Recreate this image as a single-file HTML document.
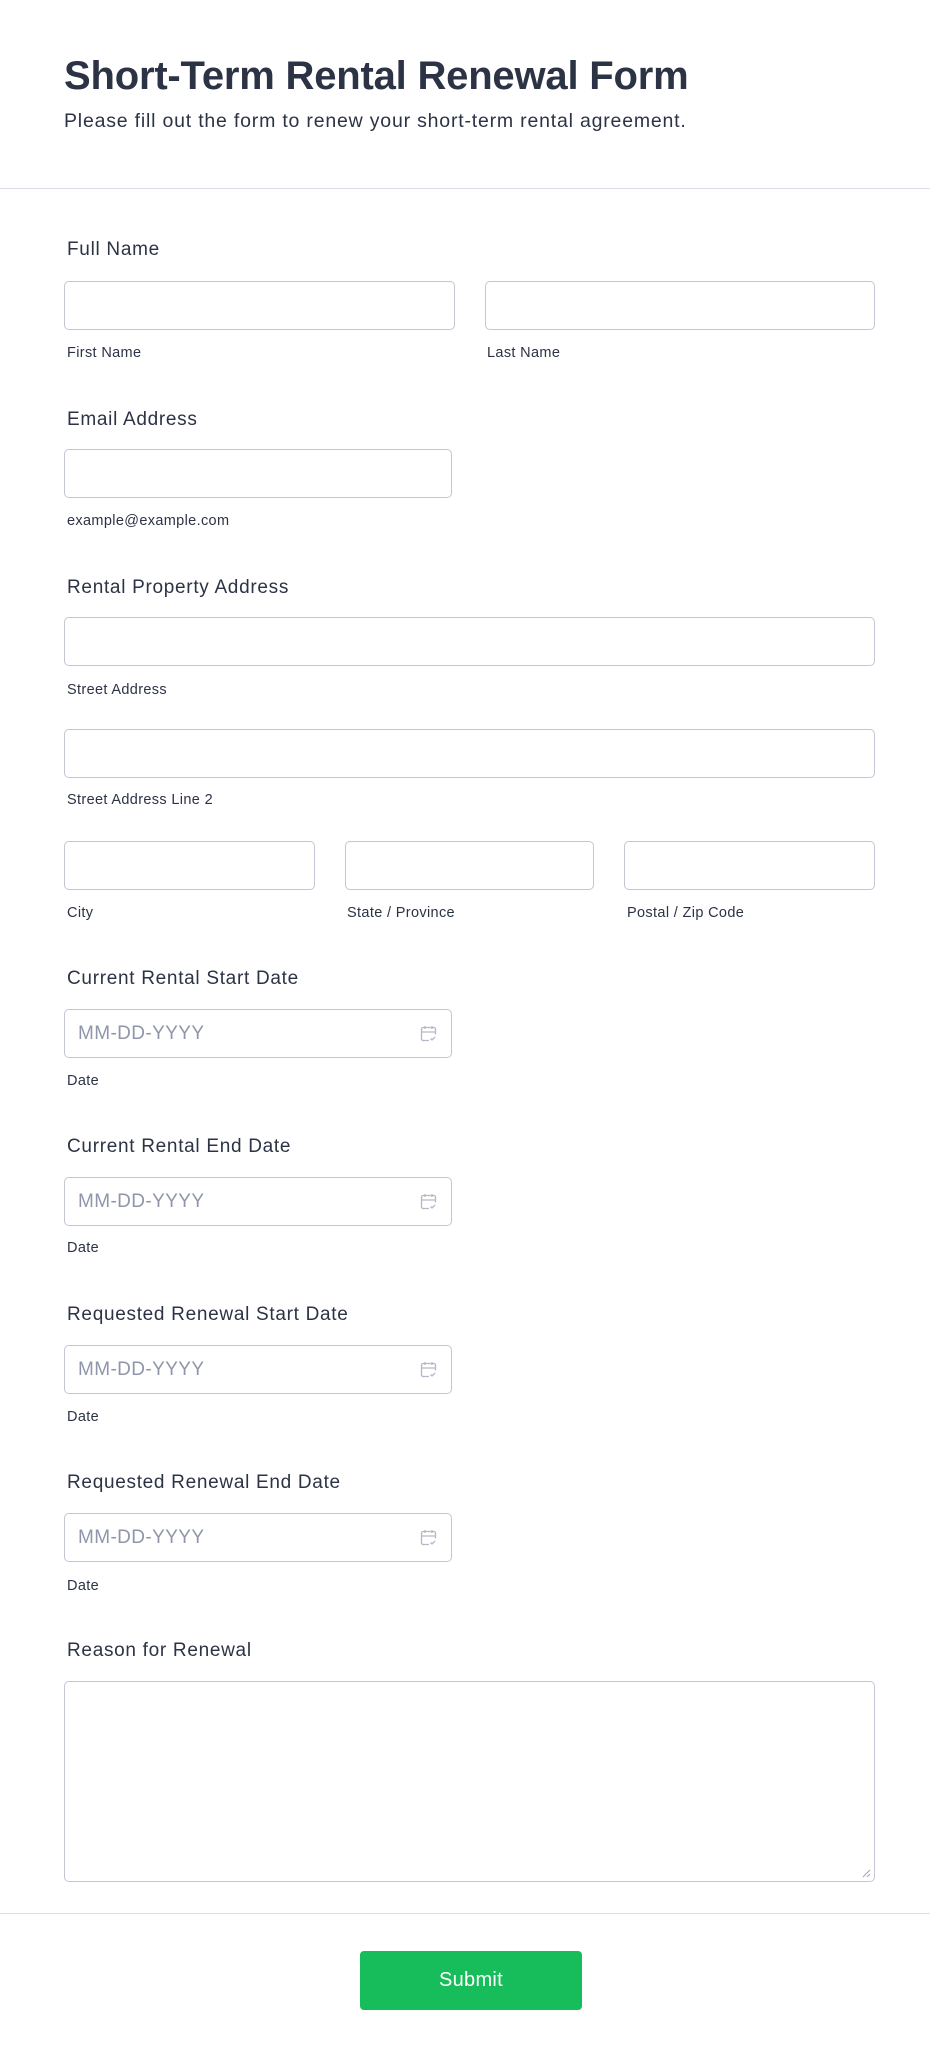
<!DOCTYPE html>
<html><head><meta charset="utf-8"><style>
*{box-sizing:border-box;margin:0;padding:0}
body{width:930px;height:2059px;background:#fff;font-family:"Liberation Sans",sans-serif;color:#2c3345;position:relative;overflow:hidden}
.a{position:absolute;white-space:nowrap}
h1{position:absolute;left:64px;top:54px;font-size:40px;font-weight:bold;letter-spacing:-0.2px}
.sub{left:64px;top:110px;font-size:19.5px;letter-spacing:0.8px}
.hr{position:absolute;left:0;width:930px;height:1px;background:#dcdde6}
.lb{font-size:19px;left:67px;transform:translateY(-50%);letter-spacing:0.7px}
.sl{font-size:14.5px;transform:translateY(-50%);letter-spacing:0.35px}
.in{position:absolute;border:1px solid #c3c6d4;border-radius:5px;background:#fff}
.ph{position:absolute;left:13px;top:50%;transform:translateY(-50%);font-size:19px;color:#8f96a8;letter-spacing:0.4px}
.cal{position:absolute;right:14px;top:50%;transform:translateY(-50%)}
.btn{position:absolute;left:360px;top:1951px;width:222px;height:59px;background:#18bd5b;border-radius:4px;color:#fff;font-size:20px;text-align:center;line-height:59px;letter-spacing:0.3px}
</style></head><body>
<h1>Short-Term Rental Renewal Form</h1>
<div class="a sub">Please fill out the form to renew your short-term rental agreement.</div>
<div class="hr" style="top:188px"></div>

<div class="a lb" style="top:250px">Full Name</div>
<div class="in" style="left:64px;top:281px;width:391px;height:49px"></div>
<div class="in" style="left:485px;top:281px;width:390px;height:49px"></div>
<div class="a sl" style="left:67px;top:353px">First Name</div>
<div class="a sl" style="left:487px;top:353px">Last Name</div>

<div class="a lb" style="top:420px">Email Address</div>
<div class="in" style="left:64px;top:449px;width:388px;height:49px"></div>
<div class="a sl" style="left:67px;top:521px">example@example.com</div>

<div class="a lb" style="top:588px">Rental Property Address</div>
<div class="in" style="left:64px;top:617px;width:811px;height:49px"></div>
<div class="a sl" style="left:67px;top:690px">Street Address</div>
<div class="in" style="left:64px;top:729px;width:811px;height:49px"></div>
<div class="a sl" style="left:67px;top:800px">Street Address Line 2</div>
<div class="in" style="left:64px;top:841px;width:251px;height:49px"></div>
<div class="in" style="left:345px;top:841px;width:249px;height:49px"></div>
<div class="in" style="left:624px;top:841px;width:251px;height:49px"></div>
<div class="a sl" style="left:67px;top:913px">City</div>
<div class="a sl" style="left:347px;top:913px">State / Province</div>
<div class="a sl" style="left:627px;top:913px">Postal / Zip Code</div>

<div class="a lb" style="top:979px">Current Rental Start Date</div>
<div class="in" style="left:64px;top:1009px;width:388px;height:49px"><span class="ph">MM-DD-YYYY</span><svg class="cal" width="17" height="17" viewBox="0 0 17 17" fill="none" stroke="#b4b8c8" stroke-width="1.3"><path d="M9 15H3a1.5 1.5 0 0 1-1.5-1.5v-10A1.5 1.5 0 0 1 3 2h11a1.5 1.5 0 0 1 1.5 1.5V9M1.5 6.5h14M5 .5v3M12 .5v3M10.5 13l1.5 1.5 3-3"/></svg></div>
<div class="a sl" style="left:67px;top:1081px">Date</div>

<div class="a lb" style="top:1147px">Current Rental End Date</div>
<div class="in" style="left:64px;top:1177px;width:388px;height:49px"><span class="ph">MM-DD-YYYY</span><svg class="cal" width="17" height="17" viewBox="0 0 17 17" fill="none" stroke="#b4b8c8" stroke-width="1.3"><path d="M9 15H3a1.5 1.5 0 0 1-1.5-1.5v-10A1.5 1.5 0 0 1 3 2h11a1.5 1.5 0 0 1 1.5 1.5V9M1.5 6.5h14M5 .5v3M12 .5v3M10.5 13l1.5 1.5 3-3"/></svg></div>
<div class="a sl" style="left:67px;top:1248px">Date</div>

<div class="a lb" style="top:1315px">Requested Renewal Start Date</div>
<div class="in" style="left:64px;top:1345px;width:388px;height:49px"><span class="ph">MM-DD-YYYY</span><svg class="cal" width="17" height="17" viewBox="0 0 17 17" fill="none" stroke="#b4b8c8" stroke-width="1.3"><path d="M9 15H3a1.5 1.5 0 0 1-1.5-1.5v-10A1.5 1.5 0 0 1 3 2h11a1.5 1.5 0 0 1 1.5 1.5V9M1.5 6.5h14M5 .5v3M12 .5v3M10.5 13l1.5 1.5 3-3"/></svg></div>
<div class="a sl" style="left:67px;top:1417px">Date</div>

<div class="a lb" style="top:1483px">Requested Renewal End Date</div>
<div class="in" style="left:64px;top:1513px;width:388px;height:49px"><span class="ph">MM-DD-YYYY</span><svg class="cal" width="17" height="17" viewBox="0 0 17 17" fill="none" stroke="#b4b8c8" stroke-width="1.3"><path d="M9 15H3a1.5 1.5 0 0 1-1.5-1.5v-10A1.5 1.5 0 0 1 3 2h11a1.5 1.5 0 0 1 1.5 1.5V9M1.5 6.5h14M5 .5v3M12 .5v3M10.5 13l1.5 1.5 3-3"/></svg></div>
<div class="a sl" style="left:67px;top:1586px">Date</div>

<div class="a lb" style="top:1651px">Reason for Renewal</div>
<div class="in" style="left:64px;top:1681px;width:811px;height:201px"><svg style="position:absolute;right:3px;bottom:3px" width="9" height="9" viewBox="0 0 9 9" stroke="#a0a4b4" stroke-width="1"><path d="M8 1L1 8M8 5L5 8"/></svg></div>

<div class="hr" style="top:1913px"></div>
<div class="btn">Submit</div>
</body></html>
